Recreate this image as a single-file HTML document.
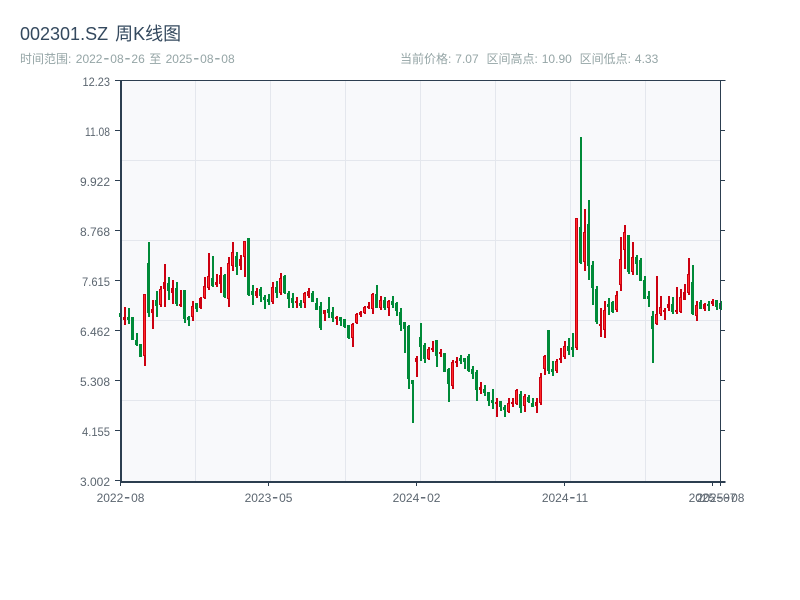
<!DOCTYPE html>
<html><head><meta charset="utf-8"><style>
html,body{margin:0;padding:0;background:#fff;width:800px;height:600px;overflow:hidden}
svg{display:block}
text{font-family:"Liberation Sans","Noto Sans CJK SC",sans-serif}
.y{font-size:12px;fill:#5c6670;text-anchor:end}
.x{font-size:12px;fill:#5c6670;text-anchor:middle}
.h{font-size:18px}
</style></head><body>
<svg width="800" height="600" viewBox="0 0 800 600" xmlns="http://www.w3.org/2000/svg">
<text x="20" y="40" font-size="18" fill="#34495e" word-spacing="2">002301.SZ 周K线图</text>
<text x="20" y="63" font-size="12" fill="#95a5a6" word-spacing="1.1">时间范围: 2022<tspan class="h" dx=".9" dy=".5">-</tspan><tspan dx=".9" dy="-.5">08</tspan><tspan class="h" dx=".9" dy=".5">-</tspan><tspan dx=".9" dy="-.5">26 至 2025</tspan><tspan class="h" dx=".9" dy=".5">-</tspan><tspan dx=".9" dy="-.5">08</tspan><tspan class="h" dx=".9" dy=".5">-</tspan><tspan dx=".9" dy="-.5">08</tspan></text>
<text x="400" y="63" font-size="12" fill="#95a5a6" word-spacing="0.6">当前价格: 7.07 &#160;区间高点: 10.90 &#160;区间低点: 4.33</text>
<rect x="120" y="81" width="600" height="400" fill="#f8f9fb"/>
<path d="M195.5 81V481M270.5 81V481M345.5 81V481M420.5 81V481M495.5 81V481M570.5 81V481M645.5 81V481M120 160.5H720M120 240.5H720M120 320.5H720M120 400.5H720" stroke="#e4e7ed" stroke-width="1" fill="none"/>
<path fill="none" stroke="#008a38" stroke-width="2" d="M121 313V317M129 308V324M133 317V340M137 333V346M141 344V357M149 242V317M157 291V317M169 277V300M177 282V306M185 290V323M189 316V326M197 303V312M213 256V287M225 274V298M237 252V275M249 238V296M253 285V305M261 287V302M265 295V309M269 294V305M277 281V298M285 275V294M289 291V308M293 293V308M301 300V308M313 291V302M317 298V310M321 302V330M329 297V318M333 307V322M341 317V326M345 319V328M349 325V339M377 285V308M385 297V310M393 296V308M397 302V316M401 308V331M405 322V353M409 325V389M413 380V423M421 323V361M425 343V363M437 340V367M445 353V372M449 368V402M461 355V364M465 358V369M469 354V372M473 366V379M477 370V401M485 385V396M489 392V406M493 389V409M501 401V411M505 405V417M521 391V413M529 395V403M533 398V407M549 330V374M553 361V376M569 338V355M573 333V357M581 137V264M589 200V280M593 261V305M597 286V324M609 298V315M613 301V313M629 235V274M637 255V275M641 258V281M645 276V299M649 291V307M653 311V363M673 297V314M693 265V315M701 300V309M709 301V311M717 300V310M721 301V310"/>
<path fill="none" stroke="#008a38" stroke-width="3" d="M120.5 313V317M128.5 317V320M132.5 317V340M136.5 340V345M140.5 344V357M148.5 263V313M156.5 300V306M168.5 283V291M176.5 288V304M184.5 290V319M188.5 317V320M196.5 303V309M212.5 278V286M224.5 275V297M236.5 256V267M248.5 238V295M252.5 291V295M260.5 289V296M264.5 297V300M268.5 299V302M276.5 287V293M284.5 276V293M288.5 293V299M292.5 298V303M300.5 303V306M312.5 293V302M316.5 303V310M320.5 306V328M328.5 309V313M332.5 312V318M340.5 317V321M344.5 319V327M348.5 325V338M376.5 294V308M384.5 300V308M392.5 301V305M396.5 303V311M400.5 312V325M404.5 322V329M408.5 326V379M412.5 380V384M420.5 337V347M424.5 345V359M436.5 340V356M444.5 353V372M448.5 369V384M460.5 358V361M464.5 358V362M468.5 356V371M472.5 369V374M476.5 372V390M484.5 389V393M488.5 392V401M492.5 400V403M500.5 401V407M504.5 407V410M520.5 394V408M528.5 397V402M532.5 403V407M548.5 330V371M552.5 369V372M568.5 346V351M572.5 347V350M580.5 227V263M588.5 224V266M592.5 265V288M596.5 289V322M608.5 304V307M612.5 302V312M628.5 235V272M636.5 257V264M640.5 260V281M644.5 280V299M648.5 296V299M652.5 316V329M672.5 304V312M692.5 282V314M700.5 302V309M708.5 304V306M716.5 300V307M720.5 303V309"/>
<path fill="none" stroke="#cc0010" stroke-width="2" d="M125 307V325M145 294V366M153 300V329M161 286V307M165 264V307M173 280V304M181 290V307M193 301V321M201 297V309M205 277V299M209 253V290M217 274V287M221 267V293M229 257V307M233 242V271M241 255V270M245 241V277M257 288V298M273 282V304M281 273V295M297 297V308M305 292V308M309 288V298M325 310V321M337 316V325M353 323V347M357 313V324M361 311V317M365 306V314M369 302V309M373 293V314M381 296V310M389 300V316M417 356V377M429 347V360M433 341V352M441 349V357M453 360V389M457 357V367M481 382V394M497 398V417M509 398V413M513 398V407M517 389V405M525 394V412M537 398V413M541 373V405M545 355V375M557 359V373M561 348V363M565 341V359M577 218V350M585 209V271M601 308V337M605 301V338M617 291V312M621 237V291M625 225V269M633 242V275M657 276V325M661 296V316M665 308V320M669 296V311M677 287V314M681 289V313M685 284V300M689 258V295M697 301V321M705 303V311M713 299V306"/>
<path fill="none" stroke="#cc0010" stroke-width="3" d="M124.5 317V320M144.5 294V356M152.5 309V313M160.5 289V305M164.5 282V289M172.5 288V293M180.5 304V306M192.5 306V317M200.5 298V308M204.5 286V298M208.5 276V288M216.5 282V285M220.5 275V284M228.5 263V299M232.5 252V266M240.5 259V266M244.5 241V257M256.5 291V296M272.5 287V302M280.5 278V293M296.5 301V303M304.5 293V303M308.5 291V296M324.5 310V314M336.5 317V319M352.5 324V338M356.5 314V323M360.5 312V315M364.5 307V313M368.5 306V308M372.5 294V309M380.5 300V308M388.5 301V308M416.5 358V362M428.5 349V359M432.5 348V350M440.5 352V354M452.5 362V386M456.5 361V363M480.5 387V390M496.5 402V404M508.5 403V412M512.5 402V404M516.5 390V404M524.5 396V406M536.5 402V406M540.5 377V403M544.5 356V369M556.5 361V371M560.5 358V360M564.5 346V357M576.5 218V348M584.5 232V262M600.5 324V326M604.5 310V330M616.5 295V310M620.5 259V285M624.5 232V250M632.5 257V272M656.5 314V324M660.5 307V314M664.5 310V312M668.5 304V308M676.5 310V312M680.5 297V312M684.5 292V300M688.5 274V293M696.5 305V316M704.5 304V309M712.5 301V304"/>
<path fill="none" stroke="#ff2a2a" stroke-width="1" d="M144.5 295V355M160.5 290V304M192.5 307V316M204.5 287V297M208.5 277V287M228.5 264V298M232.5 253V265M244.5 242V256M272.5 288V301M280.5 279V292M304.5 294V302M352.5 325V337M356.5 315V322M364.5 308V312M372.5 295V308M380.5 301V307M388.5 302V307M428.5 350V358M452.5 363V385M508.5 404V411M516.5 391V403M524.5 397V405M540.5 378V402M544.5 357V368M556.5 362V370M564.5 347V356M576.5 219V347M584.5 233V261M604.5 311V329M616.5 296V309M620.5 260V284M624.5 233V249M632.5 258V271M656.5 315V323M660.5 308V313M680.5 298V311M688.5 275V292M696.5 306V315"/>
<path fill="none" stroke="#2c3e50" stroke-width="1" d="M115 80.5H725.5M115 130.5H120M115 180.5H120M115 230.5H120M115 280.5H120M115 330.5H120M115 380.5H120M115 430.5H120M115 480.5H120M720.5 81V481M720 130.5H725M720 180.5H725M720 230.5H725M720 280.5H725M720 330.5H725M720 380.5H725M720 430.5H725M120.5 482V486M268.5 482V486M416.5 482V486M564.5 482V486M712.5 482V486M720.5 482V486"/>
<path fill="none" stroke="#2c3e50" stroke-width="2" d="M121 81V483M120 482H725.5"/>
<text class="y" x="110" y="86" textLength="27.5" lengthAdjust="spacingAndGlyphs">12.23</text>
<text class="y" x="110" y="136" textLength="25" lengthAdjust="spacingAndGlyphs">11.08</text>
<text class="y" x="110" y="186">9.922</text>
<text class="y" x="110" y="236">8.768</text>
<text class="y" x="110" y="286" textLength="28" lengthAdjust="spacingAndGlyphs">7.615</text>
<text class="y" x="110" y="336">6.462</text>
<text class="y" x="110" y="386">5.308</text>
<text class="y" x="110" y="436" textLength="28" lengthAdjust="spacingAndGlyphs">4.155</text>
<text class="y" x="110" y="486">3.002</text>
<text class="x" x="120.5" y="502">2022<tspan class="h" dx=".9" dy=".5">-</tspan><tspan dx=".9" dy="-.5">08</tspan></text>
<text class="x" x="268.5" y="502">2023<tspan class="h" dx=".9" dy=".5">-</tspan><tspan dx=".9" dy="-.5">05</tspan></text>
<text class="x" x="416.5" y="502">2024<tspan class="h" dx=".9" dy=".5">-</tspan><tspan dx=".9" dy="-.5">02</tspan></text>
<text class="x" x="565" y="502">2024<tspan class="h" dx=".9" dy=".5">-</tspan><tspan dx=".3" dy="-.5">11</tspan></text>
<text class="x" x="712.5" y="502">2025<tspan class="h" dx=".9" dy=".5">-</tspan><tspan dx=".9" dy="-.5">07</tspan></text>
<text class="x" x="720.5" y="502">2025<tspan class="h" dx=".9" dy=".5">-</tspan><tspan dx=".9" dy="-.5">08</tspan></text>
</svg>
</body></html>
